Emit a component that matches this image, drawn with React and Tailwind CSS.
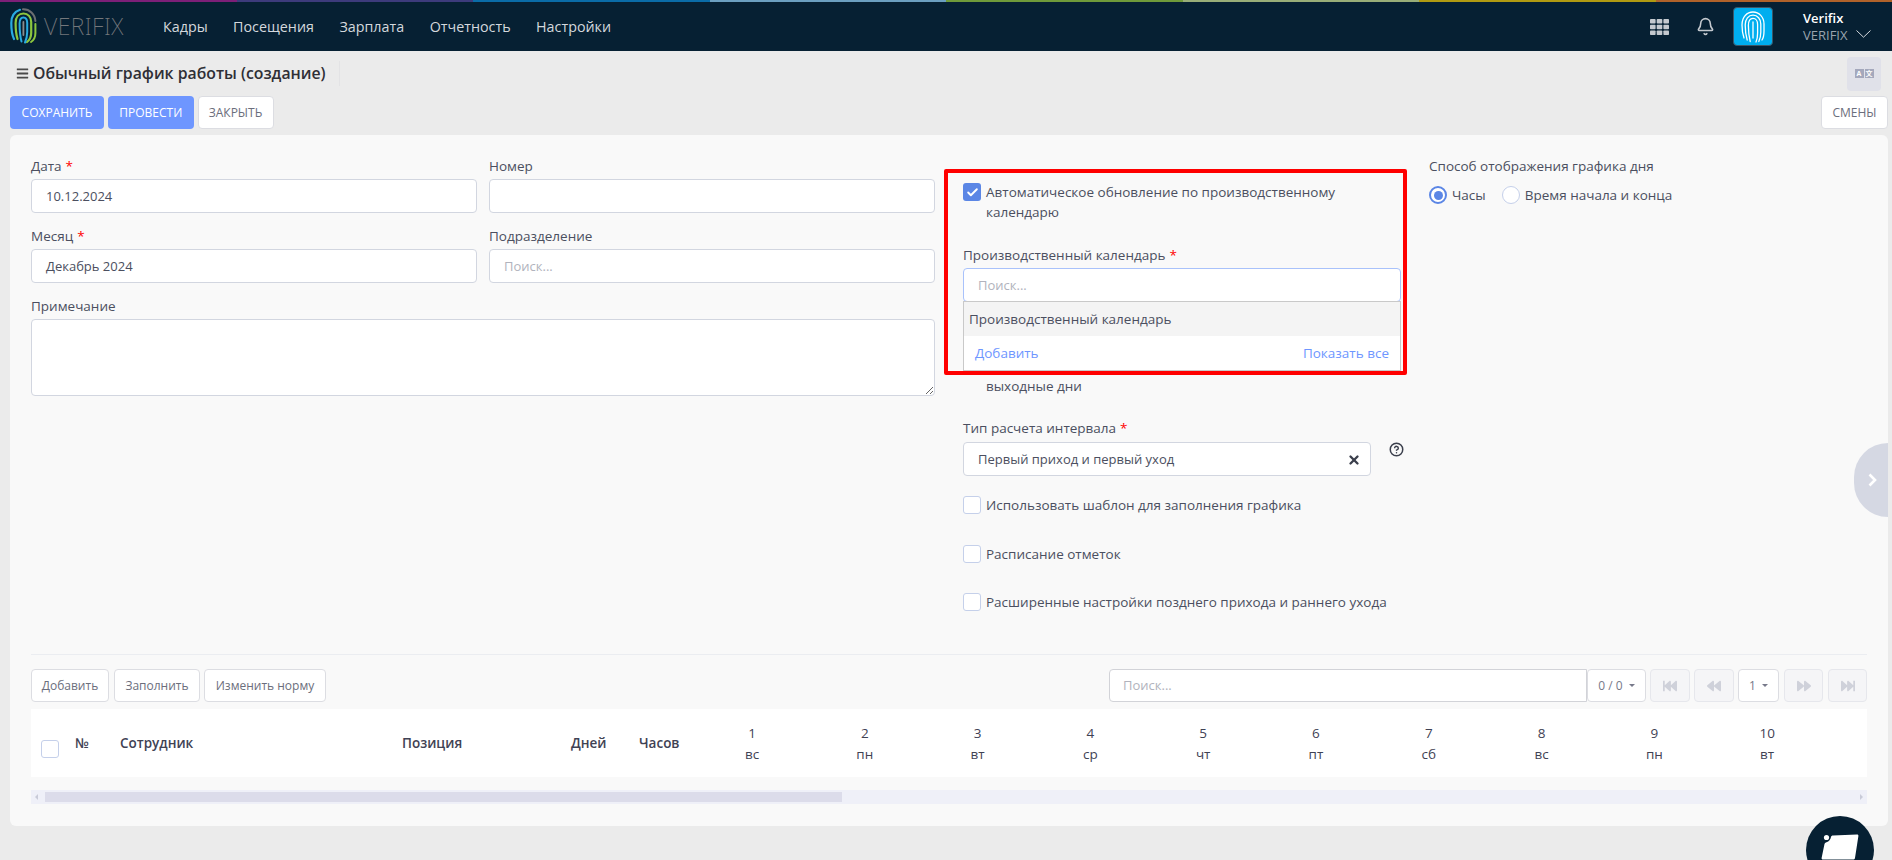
import React from "react";
import { Bell, Check, CircleHelp, X } from "lucide-react";
import { FaBackward, FaBars, FaFastBackward, FaFastForward, FaForward } from "react-icons/fa";

const stripe = [
  "bg-[#7d1f78]",
  "bg-[#3d3b7c]",
  "bg-[#0a6ca8]",
  "bg-[#6b9fc0]",
  "bg-[#6f9a3a]",
  "bg-[#98ad78]",
  "bg-[#b09a12]",
  "bg-[#b0622a]",
];
const nav = ["Кадры", "Посещения", "Зарплата", "Отчетность", "Настройки"];
const days = [
  ["1", "вс"],
  ["2", "пн"],
  ["3", "вт"],
  ["4", "ср"],
  ["5", "чт"],
  ["6", "пт"],
  ["7", "сб"],
  ["8", "вс"],
  ["9", "пн"],
  ["10", "вт"],
];

function Logo() {
  return (
    <svg width="27" height="37" viewBox="0 0 27 37" fill="none" strokeLinecap="round">
      <path d="M4 31C2 27 1.3 21 1.3 15C1.3 8 5 3.5 10 1.8" stroke="#29abe2" strokeWidth="2.2" />
      <path d="M13 1.2C19.5 1 25 6 25.4 13" stroke="#6d6f72" strokeWidth="2" />
      <path d="M25.4 16V25C25.4 29 24 32 21 34" stroke="#8cc63f" strokeWidth="2" />
      <path d="M7.5 31C6 26 5.6 21 5.6 15C5.6 9 9 5.5 13.5 5.5C18 5.5 21.2 9 21.2 14V25C21.2 29 19.5 32 17 34" stroke="#8cc63f" strokeWidth="2.2" />
      <path d="M11.5 33.5C10 28 9.6 21 9.6 15.5C9.6 11.5 11 9.5 13.4 9.5C16 9.5 17.2 11.5 17.2 15V24C17.2 28 16.5 31 15 34.5" stroke="#29abe2" strokeWidth="2" />
      <path d="M13.4 14V27" stroke="#8a8c8f" strokeWidth="1.8" />
    </svg>
  );
}

function WhitePrint() {
  return (
    <svg width="24" height="32" viewBox="0 0 24 32" fill="none" stroke="#fff" strokeWidth="1.3" strokeLinecap="round">
      <path d="M3 27C1.6 23 1 19 1 14C1 6 6 1 12 1C18 1 23 6 23 13V20C23 24 22.4 27 21 29" />
      <path d="M6.2 29C4.8 24 4.2 19 4.2 14C4.2 8 7.5 4.2 12 4.2C16.5 4.2 19.8 8 19.8 13V21C19.8 25 19 28 17.8 30.5" />
      <path d="M9.2 30.5C8 26 7.4 20 7.4 14.5C7.4 10 9.2 7.4 12 7.4C14.8 7.4 16.6 10 16.6 13.5V22C16.6 26 16 29 15 31" />
      <path d="M12 11V27" />
    </svg>
  );
}

function Req() {
  return <span className="ml-1 text-[#ff0000]">*</span>;
}

function Label({ children, required }) {
  return (
    <div className="mb-[5px] h-[18px] text-[13.5px] leading-[20px] text-[#4b4f60]">
      {children}
      {required && <Req />}
    </div>
  );
}

function Field({ children, placeholder }) {
  return (
    <div className="flex h-[34px] items-center rounded-[4px] border border-[#d2d6e0] bg-white px-[14px] pt-px text-[13px] text-[#4b4f60]">
      {placeholder ? <span className="text-[#b1b3bd]">{placeholder}</span> : children}
    </div>
  );
}

function Box({ checked, className = "" }) {
  if (checked) {
    return (
      <span className={"flex h-[18px] w-[18px] shrink-0 items-center justify-center rounded-[3px] bg-[#5b86e5] " + className}>
        <Check size={13} strokeWidth={3.5} color="#fff" />
      </span>
    );
  }
  return <span className={"block h-[18px] w-[18px] shrink-0 rounded-[3px] border border-[#c5d0ea] bg-white " + className}></span>;
}

function CheckRow({ children, className = "" }) {
  return (
    <div className={"flex h-5 items-center gap-[5px] text-[13.5px] text-[#4b4f60] " + className}>
      <Box />
      <span>{children}</span>
    </div>
  );
}

function ToolButton({ children, className = "" }) {
  return (
    <button className={"h-[33px] rounded-[4px] border border-[#dcdde2] bg-white text-xs text-[#6b6e7c] " + className}>
      {children}
    </button>
  );
}

function PageButton({ icon: Icon, className = "" }) {
  return (
    <button className={"flex h-[33px] items-center justify-center rounded-[4px] border border-[#e6e7ec] bg-[#f5f5f7] text-[#cfd1da] " + className}>
      <Icon size={14} />
    </button>
  );
}

function Caret() {
  return <span className="ml-[6px] inline-block border-x-[3px] border-t-[3px] border-x-transparent border-t-[#77798a]"></span>;
}

export default function App() {
  return (
    <div className="relative h-[860px] w-full overflow-hidden bg-[#ebebeb] font-['Open_Sans',sans-serif] text-[#4b4f60]">
      <header className="h-[51px] bg-[#062033]">
        <div className="flex h-[2px]">
          {stripe.map((c) => (
            <div key={c} className={"flex-1 " + c}></div>
          ))}
        </div>
        <div className="flex h-[49px] items-center">
          <div className="ml-[10px] flex w-[153px] items-center gap-[7px]">
            <Logo />
            <span className="font-['Noto_Sans',sans-serif] text-[23px] font-extralight leading-none tracking-[0.5px] text-[#74777b]">VERIFIX</span>
          </div>
          <nav className="flex gap-[25.5px] text-[14.3px] text-[#d4d8dd]">
            {nav.map((n) => (
              <span key={n}>{n}</span>
            ))}
          </nav>
          <div className="ml-auto flex items-center">
            <svg width="19" height="16" viewBox="0 0 19 16" fill="#c4c9cf">
              <rect x="0" y="0" width="5.6" height="4.6" rx="0.8" />
              <rect x="6.7" y="0" width="5.6" height="4.6" rx="0.8" />
              <rect x="13.4" y="0" width="5.6" height="4.6" rx="0.8" />
              <rect x="0" y="5.7" width="5.6" height="4.6" rx="0.8" />
              <rect x="6.7" y="5.7" width="5.6" height="4.6" rx="0.8" />
              <rect x="13.4" y="5.7" width="5.6" height="4.6" rx="0.8" />
              <rect x="0" y="11.4" width="5.6" height="4.6" rx="0.8" />
              <rect x="6.7" y="11.4" width="5.6" height="4.6" rx="0.8" />
              <rect x="13.4" y="11.4" width="5.6" height="4.6" rx="0.8" />
            </svg>
            <Bell size={19} strokeWidth={2} color="#c4c9cf" className="ml-[27px]" />
            <div className="ml-[18px] flex h-[39px] w-[40px] items-center justify-center rounded-[4px] border border-[#3c5667] bg-[#00aeef]">
              <WhitePrint />
            </div>
            <div className="ml-[30px] w-[50px] whitespace-nowrap text-[13px] leading-[17px]">
              <div className="font-semibold text-white">Verifix</div>
              <div className="text-[#9aa4ae]">VERIFIX</div>
            </div>
            <svg width="15" height="8" viewBox="0 0 15 8" fill="none" stroke="#d4d8dd" strokeWidth="1" className="ml-[3px] mr-[21px] mt-[15px]">
              <path d="M0.5 0.5L7.5 7.2L14.5 0.5" />
            </svg>
          </div>
        </div>
      </header>

      <div className="flex h-[45px] items-center pl-[16px] pr-[11px]">
        <FaBars size={13} color="#4a4a4a" />
        <h1 className="ml-[4px] text-[15.8px] font-semibold leading-none text-[#2f2f36]">Обычный график работы (создание)</h1>
        <div className="ml-[13px] h-[25px] w-px bg-[#e3e3e5]"></div>
        <div className="ml-auto flex h-[34px] w-[34px] items-center justify-center gap-px rounded-[4px] bg-[#e0e1e9]">
          <span className="flex h-[9px] w-[9px] items-center justify-center bg-[#a4a8bc] text-[7px] font-bold leading-none text-white">A</span>
          <span className="flex h-[9px] w-[9px] items-center justify-center bg-[#a4a8bc] font-['Noto_Sans_CJK_SC',sans-serif] text-[7px] font-bold leading-none text-white">文</span>
        </div>
      </div>

      <div className="flex h-[33px] gap-[4px] pl-[10px] pr-[4px] text-xs">
        <button className="w-[94px] rounded-[4px] bg-[#6e96ff] text-white">СОХРАНИТЬ</button>
        <button className="w-[85.5px] rounded-[4px] bg-[#6e96ff] text-white">ПРОВЕСТИ</button>
        <button className="w-[76px] rounded-[4px] border border-[#dcdde2] bg-white text-[#6b6e7c]">ЗАКРЫТЬ</button>
        <button className="ml-auto w-[67px] rounded-[4px] border border-[#dcdde2] bg-white text-[#6b6e7c]">СМЕНЫ</button>
      </div>

      <main className="relative ml-[10px] mr-[4px] mt-[6px] h-[691px] rounded-[6px] bg-[#f9f9f9] px-[21px] pt-[21px]">
        <div className="grid h-[498px] grid-cols-[446px_446px_454px_auto] items-start gap-x-[12px]">
          <div className="col-span-2 grid grid-cols-2 gap-x-[12px] gap-y-[13px]">
            <div>
              <Label required>Дата</Label>
              <Field>10.12.2024</Field>
            </div>
            <div>
              <Label>Номер</Label>
              <Field></Field>
            </div>
            <div>
              <Label required>Месяц</Label>
              <Field>Декабрь 2024</Field>
            </div>
            <div>
              <Label>Подразделение</Label>
              <Field placeholder="Поиск..."></Field>
            </div>
            <div className="col-span-2">
              <Label>Примечание</Label>
              <textarea className="block h-[77px] w-full rounded-[4px] border border-[#d2d6e0] bg-white"></textarea>
            </div>
          </div>

          <section className="relative ml-[16px] pt-[26px]">
            <div className="flex gap-[5px] text-[13.5px] leading-5 text-[#4b4f60]">
              <Box checked className="mt-px" />
              <span className="w-[400px]">Автоматическое обновление по производственному календарю</span>
            </div>

            <div className="relative mt-[23px]">
              <Label required>Производственный календарь</Label>
              <div className="flex h-[34px] items-center rounded-[4px] border border-[#a9c2fb] bg-white px-[14px] pt-px text-[13px] text-[#b1b3bd]">
                Поиск...
              </div>
              <div className="absolute left-0 right-0 top-[56px] z-10 h-[70px] border border-[#c9c9c9] bg-white text-[13.5px]">
                <div className="flex h-[34px] items-center bg-[#f4f4f4] pl-[5px] pt-px text-[#4b4f60]">Производственный календарь</div>
                <div className="flex h-[34px] items-center justify-between px-[11px] text-[#6e96ff]">
                  <span>Добавить</span>
                  <span>Показать все</span>
                </div>
              </div>
            </div>

            <div className="mt-[-1px] flex gap-[5px] pt-[55px] text-[13.5px] leading-5 text-[#4b4f60]">
              <Box checked className="mt-px" />
              <span>
                &nbsp;
                <br />
                выходные дни
              </span>
            </div>

            <div className="mt-[22px] flex gap-[18px]">
              <div className="w-[408px] shrink-0">
                <Label required>Тип расчета интервала</Label>
                <div className="mt-[6px] flex h-[34px] items-center justify-between rounded-[4px] border border-[#d2d6e0] bg-white pl-[14px] pr-[9px] pt-px text-[13px]">
                  <span>Первый приход и первый уход</span>
                  <X size={14} strokeWidth={4} color="#3b3f4c" />
                </div>
              </div>
              <CircleHelp size={15} strokeWidth={2.4} color="#3b3f4c" className="mt-[24px] shrink-0" />
            </div>

            <CheckRow className="mt-[19px]">Использовать шаблон для заполнения графика</CheckRow>
            <CheckRow className="mt-[29px]">Расписание отметок</CheckRow>
            <CheckRow className="mt-[28px]">Расширенные настройки позднего прихода и раннего ухода</CheckRow>

            <div className="pointer-events-none absolute left-[-19px] top-[13px] z-20 h-[206px] w-[463px] rounded-[2px] border-4 border-[#ff0000]"></div>
          </section>

          <div className="ml-[16px]">
            <Label>Способ отображения графика дня</Label>
            <div className="mt-[11px] flex h-[20px] items-center text-[13.5px]">
              <span className="flex h-[18px] w-[18px] items-center justify-center rounded-full border-2 border-[#5b86e5] bg-white">
                <span className="h-[9px] w-[9px] rounded-full bg-[#5b86e5]"></span>
              </span>
              <span className="ml-[5px]">Часы</span>
              <span className="ml-[16px] h-[18px] w-[18px] rounded-full border border-[#c5d0ea] bg-white"></span>
              <span className="ml-[5px]">Время начала и конца</span>
            </div>
          </div>
        </div>

        <div className="h-px bg-[#ebedf1]"></div>

        <div className="mt-[14px] flex items-center">
          <ToolButton className="w-[78px]">Добавить</ToolButton>
          <ToolButton className="ml-[5px] w-[86px]">Заполнить</ToolButton>
          <ToolButton className="ml-[4px] w-[122px]">Изменить норму</ToolButton>

          <div className="ml-auto flex h-[33px] w-[478px] items-center rounded-l-[4px] border border-[#d2d3d8] bg-white pl-[13px] text-[13px] text-[#b1b3bd]">
            Поиск...
          </div>
          <button className="flex h-[33px] w-[59px] items-center justify-center rounded-[4px] border border-[#dcdde2] bg-white text-xs text-[#77798a]">
            0 / 0
            <Caret />
          </button>
          <PageButton icon={FaFastBackward} className="ml-[4px] w-[40px]" />
          <PageButton icon={FaBackward} className="ml-[4px] w-[40px]" />
          <button className="ml-[4px] flex h-[33px] w-[41px] items-center justify-center rounded-[4px] border border-[#dcdde2] bg-white text-xs text-[#77798a]">
            1
            <Caret />
          </button>
          <PageButton icon={FaForward} className="ml-[5px] w-[39px]" />
          <PageButton icon={FaFastForward} className="ml-[5px] w-[39px]" />
        </div>

        <div className="mt-[7px] flex h-[68px] items-center bg-white text-[13.5px] text-[#3f4254]">
          <div className="w-[44px] pl-[10px]">
            <Box className="mt-3" />
          </div>
          <div className="w-[45px] pt-px font-semibold">№</div>
          <div className="w-[282px] pt-px font-semibold">Сотрудник</div>
          <div className="w-[169px] pt-px font-semibold">Позиция</div>
          <div className="w-[68px] pt-px font-semibold">Дней</div>
          <div className="w-[56.6px] pt-px font-semibold">Часов</div>
          {days.map(([num, dow]) => (
            <div key={num} className="w-[112.8px] pt-[2px] text-center font-medium leading-[21px]">
              <div>{num}</div>
              <div>{dow}</div>
            </div>
          ))}
        </div>

        <div className="mt-[13px] flex h-[14px] items-center bg-[#eff0f8]">
          <span className="ml-[4px] border-y-[3px] border-r-[3px] border-y-transparent border-r-[#c9cbd8]"></span>
          <div className="ml-[7px] h-[10px] w-[797px] bg-[#dcdcea]"></div>
          <span className="ml-auto mr-[4px] border-y-[3px] border-l-[3px] border-y-transparent border-l-[#c9cbd8]"></span>
        </div>

        <button className="absolute right-0 top-[308px] flex h-[74px] w-[34px] items-center justify-center rounded-l-[37px] bg-[#d5d8e3]">
          <svg width="9" height="14" viewBox="0 0 9 14" fill="none" stroke="#fff" strokeWidth="2.6" className="ml-[2px]">
            <path d="M1.5 1.5L7 7L1.5 12.5" />
          </svg>
        </button>
      </main>

      <button className="absolute bottom-[-24px] right-[18px] flex h-[68px] w-[68px] justify-center rounded-full bg-[#062033] pt-[18px]">
        <svg width="38" height="30" viewBox="0 0 38 30" fill="#fff">
          <circle cx="5.5" cy="3.5" r="2.6" />
          <path d="M12 1.5L36 0.5C37 0.5 37.6 1.2 37.4 2L34 24C33.8 25 33 25.5 32 25.5H2C1 25.5 0.4 24.8 0.6 24L3.5 10C3.7 9 4.6 8.5 5.5 8.2C8 7.5 9.5 5.5 10 3C10.2 2 11 1.5 12 1.5Z" />
        </svg>
      </button>
    </div>
  );
}
